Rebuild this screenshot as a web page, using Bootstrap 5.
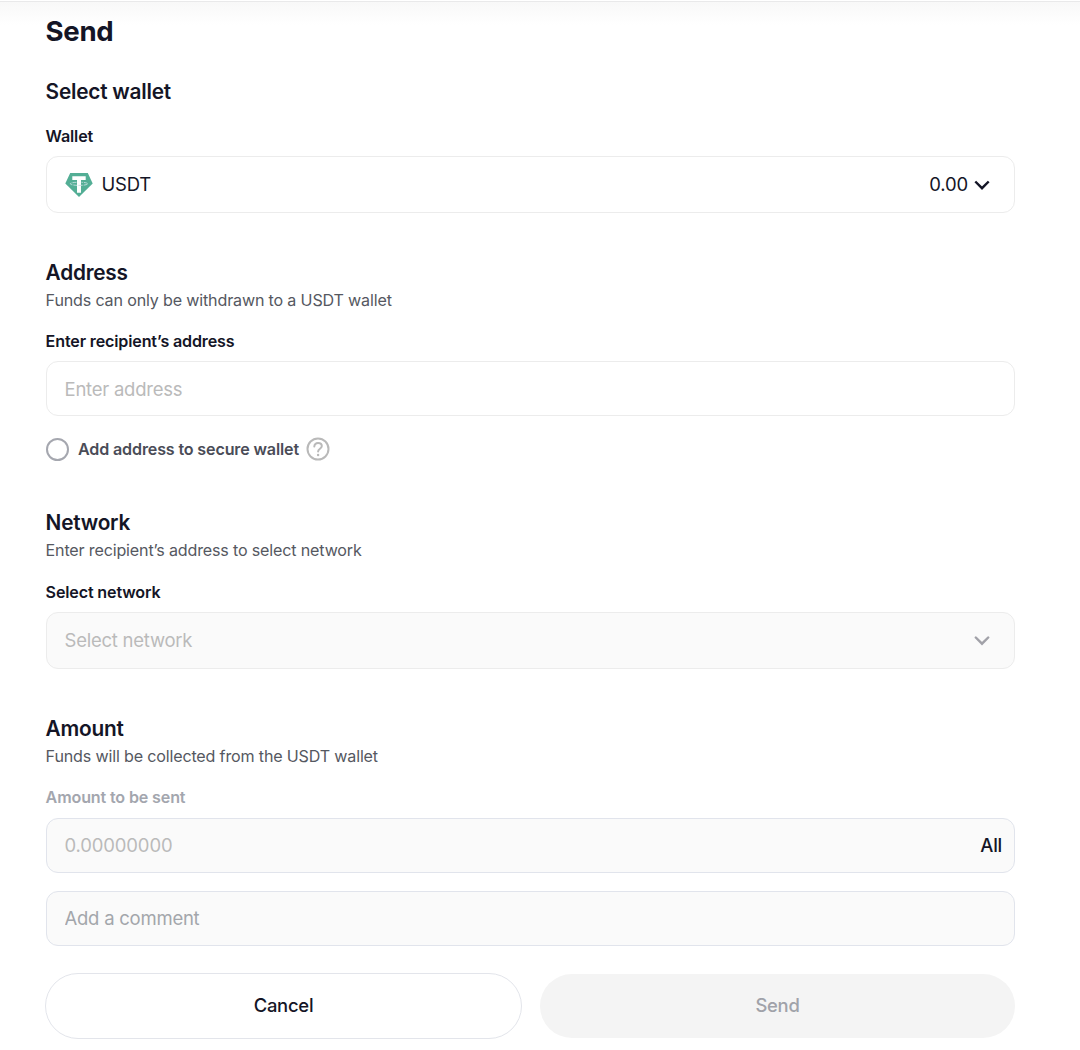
<!DOCTYPE html>
<html lang="en">
<head>
<meta charset="utf-8">
<meta name="viewport" content="width=device-width, initial-scale=1">
<title>Send</title>
<link href="https://cdn.jsdelivr.net/npm/bootstrap@5.3.0/dist/css/bootstrap.min.css" rel="stylesheet">
<style>
  body { font-family: Inter, "Liberation Sans", sans-serif; color: #141526; background: #fff; height: 1050px; overflow: hidden; }
  .top-edge { height: 24px; border-top: 1px solid #e9e9ea; margin-top: 1px; background: linear-gradient(#f8f8f8, #fff); }
  .send-form { width: 970px; margin-left: 45px; margin-top: -9px; }
  .page-title { font-size: 27.6px; font-weight: 700; line-height: 30px; margin: 0 0 31px .5px; letter-spacing: -.3px; }
  .group-title { font-size: 20.8px; font-weight: 600; line-height: 30px; margin-left: .6px; letter-spacing: -.22px; }
  .group-hint { font-size: 16.1px; line-height: 24px; color: #555861; margin-left: .6px; letter-spacing: -.17px; }
  .field-label { font-size: 16.1px; font-weight: 600; line-height: 20px; margin: 19px 0 10px .6px; letter-spacing: -.15px; }
  .field-box { height: 57px; border: 1px solid #ececec; border-radius: 12px; padding: 1px 24px 0 18px; font-size: 18.5px; margin-left: .5px; background: #fff; letter-spacing: -.24px; }
  .field-short { height: 55px; padding-top: 3px; }
  .field-off { background: #fafafa; }
  .field-cool { border-color: #e1e4ec; padding-right: 12px; padding-top: 1px; }
  .field-box input { border: 0; outline: 0; background: transparent; padding: 0; color: inherit; letter-spacing: inherit; }
  .field-box input::placeholder { color: #bababa; opacity: 1; }
  .field-box .comment-input::placeholder { color: #a3a6ab; }
  .ghost-text { color: #bababa; }
  .digits, .field-box .digits { letter-spacing: -.15px; }
  .round-check { width: 23px; height: 23px; margin: 0 0 0 1px; border: 2px solid #a5a7af; border-radius: 50%; appearance: none; }
  .check-text { font-size: 16.1px; font-weight: 600; color: #4a4c57; line-height: 24px; letter-spacing: -.15px; margin: 0 7px 0 9px; }
  .muted-label { color: #a3a6ae; margin-bottom: 11px; }
  .wallet-name { margin-left: 9px; }
  .wallet-arrow { margin-left: 6px; }
  .pill { height: 66px; width: 477px; border-radius: 33px; font-size: 18.4px; font-weight: 500; letter-spacing: -.22px; border: 1px solid #e3e5eb; color: #141526; background: #fff; }
  .pill-off, .pill-off:disabled { height: 64px; width: 475px; background: #f4f4f4; border: 0; color: #a0a2a9; }
</style>
</head>
<body>
<div class="top-edge"></div>
<form class="send-form d-flex flex-column">
  <h1 class="page-title">Send</h1>

  <section>
    <h2 class="group-title mb-0">Select wallet</h2>
    <div class="field-label">Wallet</div>
    <div class="field-box d-flex align-items-center">
      <svg width="28" height="25" viewBox="0 0 28 25" aria-hidden="true">
        <path d="M5.200 0h17.600L27.700 10.500 14 24.100.3 10.500z" fill="#53ae95"/>
        <path d="M7.300 3.300h13.400v3.800h-4.700v12.600h-4V7.100H7.300z" fill="#fff"/>
        <path d="M11.500 9.300c-3.600.2-6.200.7-6.200 1.500s3.900 1.600 8.700 1.600 8.700-.8 8.700-1.600-2.600-1.300-6.200-1.500" fill="none" stroke="#c6dfe0" stroke-width=".9" stroke-dasharray="4 1"/>
      </svg>
      <span class="wallet-name">USDT</span>
      <span class="ms-auto digits">0.00</span>
      <svg class="wallet-arrow" width="16" height="10" viewBox="0 0 16 10" fill="none" stroke="#141526" stroke-width="2.400" aria-hidden="true"><path d="M1.300 1.500 8 8.200l6.700-6.700"/></svg>
    </div>
  </section>

  <section style="margin-top:45px">
    <h2 class="group-title mb-0">Address</h2>
    <div class="group-hint">Funds can only be withdrawn to a USDT wallet</div>
    <div class="field-label">Enter recipient’s address</div>
    <div class="field-box field-short d-flex align-items-center">
      <input class="w-100" type="text" placeholder="Enter address">
    </div>
    <div class="d-flex align-items-center" style="margin-top:21px">
      <input class="round-check" type="checkbox" id="secure">
      <label class="check-text" for="secure">Add address to secure wallet</label>
      <svg width="24" height="24" viewBox="0 0 24 24" fill="none" stroke="#b9b9b9" stroke-width="2" stroke-linecap="round" aria-hidden="true">
        <circle cx="12" cy="12" r="10.500"/><path d="M8.300 9.500c.2-2.300 1.700-3.600 3.800-3.600s3.700 1.300 3.700 3.200c0 2.700-3.700 2.700-3.700 5.500"/><circle cx="12.100" cy="18" r="1.200" fill="#b9b9b9" stroke="none"/>
      </svg>
    </div>
  </section>

  <section style="margin-top:47px">
    <h2 class="group-title mb-0">Network</h2>
    <div class="group-hint">Enter recipient’s address to select network</div>
    <div class="field-label" style="margin-top:20px">Select network</div>
    <div class="field-box field-off d-flex align-items-center">
      <span class="ghost-text">Select network</span>
      <svg class="ms-auto" width="16" height="10" viewBox="0 0 16 10" fill="none" stroke="#a1a1a8" stroke-width="2.400" stroke-linecap="round" aria-hidden="true"><path d="M1.800 1.500 8 7.700l6.200-6.200"/></svg>
    </div>
  </section>

  <section style="margin-top:45px">
    <h2 class="group-title mb-0">Amount</h2>
    <div class="group-hint">Funds will be collected from the USDT wallet</div>
    <div class="field-label muted-label">Amount to be sent</div>
    <div class="field-box field-short field-off field-cool d-flex align-items-center">
      <input class="flex-grow-1 digits" type="text" placeholder="0.00000000">
      <span style="font-weight:500">All</span>
    </div>
    <div class="field-box field-short field-off field-cool d-flex align-items-center" style="margin-top:18px">
      <input class="comment-input w-100" type="text" placeholder="Add a comment">
    </div>
  </section>

  <div class="d-flex align-items-center justify-content-between" style="margin-top:27px">
    <button type="button" class="pill">Cancel</button>
    <button type="button" class="pill pill-off" disabled>Send</button>
  </div>
</form>
<script src="https://cdn.jsdelivr.net/npm/bootstrap@5.3.0/dist/js/bootstrap.bundle.min.js"></script>
</body>
</html>
